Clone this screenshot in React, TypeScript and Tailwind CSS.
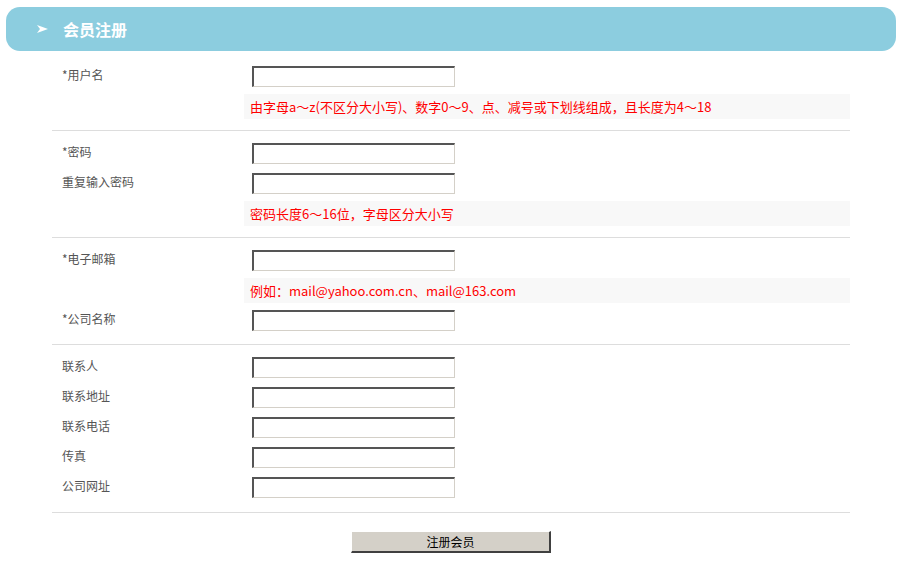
import React from "react";

const font = { fontFamily: '"Noto Sans CJK SC", "Noto Sans", sans-serif' };

function Input() {
  return (
    <input
      type="text"
      className="box-border w-[203px] h-[21px] border-t-2 border-l-2 border-b border-r border-t-[#555] border-l-[#555] border-b-[#d4d0c8] border-r-[#d4d0c8] bg-white outline-none"
    />
  );
}

function Row({ label, first }: { label: string; first?: boolean }) {
  return (
    <div className={`flex items-center h-[21px] ${first ? "" : "mt-[9px]"}`}>
      <div className="w-[192px] pl-[10px] text-[12px] text-[#555] leading-none -mt-[3px]">{label}</div>
      <div className="pl-[8px]">
        <Input />
      </div>
    </div>
  );
}

function Hint({ text }: { text: string }) {
  return (
    <div className="ml-[192px] mt-[7px] h-[25px] bg-[#f8f8f8] flex items-center pl-[6px] text-[13px] text-[#ff0000] leading-none">
      {text}
    </div>
  );
}

export default function App() {
  return (
    <div className="w-[898px] h-[565px] bg-white overflow-hidden" style={font}>
      <div className="pt-[7px] pl-[6px] pr-[2px]">
        <div className="h-[44px] rounded-[14px] bg-[#8ccddf] flex items-center pl-[31px]">
          <svg width="11" height="8" viewBox="0 0 11 8" className="mr-[15px]">
            <polygon points="0,0 11,4 0,8 3,4" fill="#fff" />
          </svg>
          <span className="text-white font-bold text-[16px]">会员注册</span>
        </div>
      </div>
      <div className="mx-[52px] w-[798px] mt-[3px]">
        <div className="pt-[12px] pb-[11px] border-b border-[#ddd]">
          <Row label="*用户名" first />
          <Hint text="由字母a～z(不区分大小写)、数字0～9、点、减号或下划线组成，且长度为4～18" />
        </div>
        <div className="pt-[12px] pb-[11px] border-b border-[#ddd]">
          <Row label="*密码" first />
          <Row label="重复输入密码" />
          <Hint text="密码长度6～16位，字母区分大小写" />
        </div>
        <div className="pt-[12px] pb-[13px] border-b border-[#ddd]">
          <Row label="*电子邮箱" first />
          <Hint text="例如：mail@yahoo.com.cn、mail@163.com" />
          <div className="mt-[-2px]">
            <Row label="*公司名称" />
          </div>
        </div>
        <div className="pt-[12px] pb-[14px] border-b border-[#ddd]">
          <Row label="联系人" first />
          <Row label="联系地址" />
          <Row label="联系电话" />
          <Row label="传真" />
          <Row label="公司网址" />
        </div>
        <div className="flex justify-center pt-[18px]">
          <button className="box-border w-[200px] h-[22px] bg-[#d4d0c8] border-t border-l border-b-2 border-r-2 border-t-white border-l-white border-b-[#404040] border-r-[#404040] text-[12px] text-black leading-none">
            注册会员
          </button>
        </div>
      </div>
    </div>
  );
}
